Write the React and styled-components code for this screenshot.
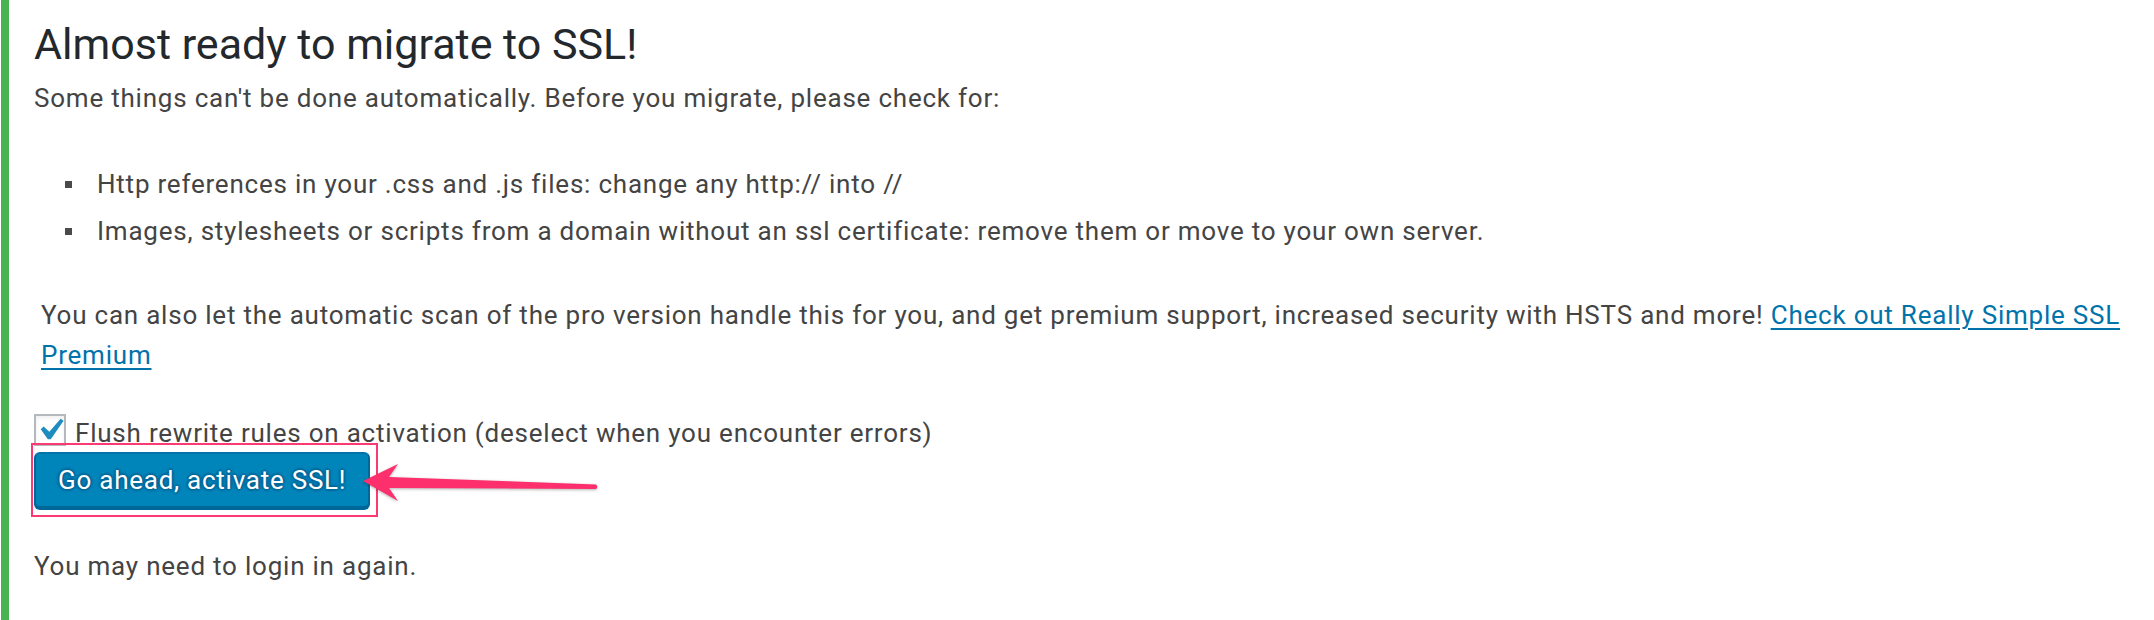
import React from "react";
import styled, { createGlobalStyle } from "styled-components";

const GlobalStyle = createGlobalStyle`
  html, body { margin: 0; padding: 0; background: #fff; }
  body { font-family: Roboto, "Liberation Sans", Arial, sans-serif; }
`;

const Notice = styled.section`
  box-sizing: border-box;
  min-height: 620px;
  margin-left: 1px;
  border-left: 8px solid #46b450;
  padding: 16px 8px 0 25px;
  background: #fff;
  color: #444;
  font-family: Roboto, "Liberation Sans", Arial, sans-serif;
  font-size: 26px;
  letter-spacing: 0.78px;
`;

const Title = styled.h1`
  margin: 0;
  font-size: 43px;
  line-height: 56px;
  font-weight: 400;
  letter-spacing: 0;
  color: #23282d;
`;

const Text = styled.p`
  margin: ${(p) => p.$top}px 0 0;
  padding-left: ${(p) => p.$indent || 0}px;
  line-height: ${(p) => p.$lh || 39}px;
`;

const List = styled.ul`
  margin: 48px 0 0;
  padding: 0;
  list-style: none;
  display: flex;
  flex-direction: column;
  gap: 11px;
`;

const Item = styled.li`
  display: flex;
  line-height: 36px;
  padding-left: 31px;
  &::before {
    content: "";
    flex-shrink: 0;
    width: 7px;
    height: 7px;
    margin-top: 15px;
    margin-right: 25px;
    background: #4a4a4a;
  }
`;

const Link = styled.a`
  color: #0073aa;
  text-decoration: underline;
  text-decoration-thickness: 2px;
  text-underline-offset: 4px;
`;

const FlushRow = styled.label`
  margin-top: 39px;
  display: flex;
  align-items: flex-start;
  gap: 9px;
`;

const Checkbox = styled.span`
  box-sizing: border-box;
  width: 32px;
  height: 32px;
  flex-shrink: 0;
  border: 2px solid #b4b9be;
  background: #fff;
  box-shadow: inset 0 2px 4px rgba(0, 0, 0, 0.07);
  display: flex;
  align-items: center;
  justify-content: center;
  overflow: visible;
`;

const FlushLabel = styled.span`
  margin-top: 4px;
  line-height: 30px;
`;

const ActionArea = styled.div`
  position: relative;
  width: fit-content;
  margin-top: 4px;
  &::before {
    content: "";
    position: absolute;
    top: -9px;
    left: -3px;
    right: -8px;
    bottom: -9px;
    border: 2px solid #fb3a74;
    pointer-events: none;
  }
`;

const PrimaryButton = styled.button`
  display: block;
  box-sizing: border-box;
  height: 56px;
  padding: 0 22px;
  border: 2px solid;
  border-color: #0073aa #006799 #006799;
  border-radius: 6px;
  background: #0085ba;
  box-shadow: 0 2px 0 #006799;
  color: #fff;
  font-family: Roboto, "Liberation Sans", Arial, sans-serif;
  font-size: 26px;
  letter-spacing: 0.75px;
  line-height: 52px;
  text-shadow: 0 -2px 2px #006799, 2px 0 2px #006799, 0 2px 2px #006799,
    -2px 0 2px #006799;
  cursor: pointer;
`;

const Arrow = styled.svg`
  position: absolute;
  left: calc(100% - 14px);
  top: 3px;
  overflow: visible;
  filter: drop-shadow(0 1px 1.5px rgba(0, 0, 0, 0.3));
  pointer-events: none;
`;

function CheckIcon() {
  return (
    <svg width="44" height="44" viewBox="0 0 20 20" style={{ flexShrink: 0 }}>
      <path
        fill="#1e8cbe"
        d="M14.83 4.89l1.34.94-5.81 8.38H9.02L5.78 9.67l1.34-1.25 2.57 2.4z"
      />
    </svg>
  );
}

export default function App() {
  return (
    <>
      <GlobalStyle />
      <Notice>
        <Title>Almost ready to migrate to SSL!</Title>
        <Text $top={7}>
          Some things can't be done automatically. Before you migrate, please
          check for:
        </Text>
        <List>
          <Item>
            Http references in your .css and .js files: change any http:// into
            //
          </Item>
          <Item>
            Images, stylesheets or scripts from a domain without an ssl
            certificate: remove them or move to your own server.
          </Item>
        </List>
        <Text $top={46} $indent={7} $lh={40}>
          You can also let the automatic scan of the pro version handle this for
          you, and get premium support, increased security with HSTS and more!{" "}
          <Link href="#">Check out Really Simple SSL Premium</Link>
        </Text>
        <FlushRow>
          <Checkbox>
            <CheckIcon />
          </Checkbox>
          <FlushLabel>
            Flush rewrite rules on activation (deselect when you encounter
            errors)
          </FlushLabel>
        </FlushRow>
        <ActionArea>
          <PrimaryButton type="button">Go ahead, activate SSL!</PrimaryButton>
          <Arrow width="245" height="52" viewBox="0 0 245 52">
            <path
              fill="#fd2f6c"
              d="M7 26 L42 9 L33 22 L240 29.5 Q242.5 31.75 240 34 L33 33 L42 46 Z"
            />
          </Arrow>
        </ActionArea>
        <Text $top={39}>You may need to login in again.</Text>
      </Notice>
    </>
  );
}
